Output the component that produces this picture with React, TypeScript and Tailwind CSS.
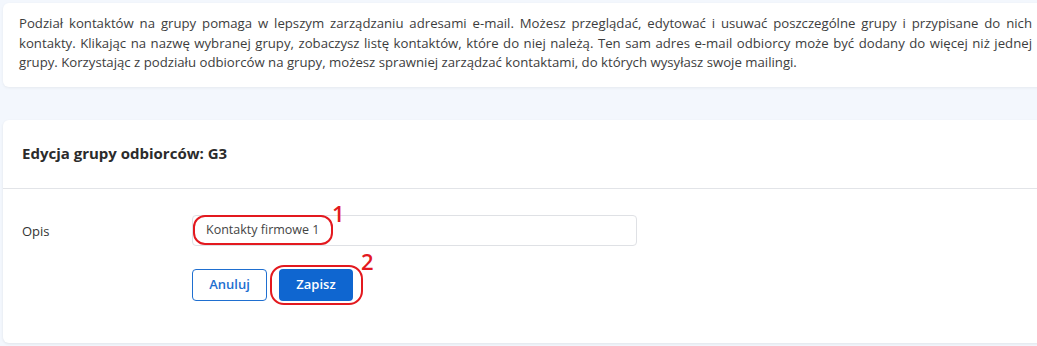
import React from "react";

const App = () => {
  return (
    <div className="w-[1037px] h-[346px] overflow-hidden bg-[#f3f7fd] font-['Open_Sans',sans-serif]">
      <div className="w-[1048px] flex flex-col pl-[3px] pt-[3px] gap-[33px]">
        <div className="bg-white rounded-md shadow-[0_1px_3px_rgba(0,0,0,0.06)] px-4 pt-[11px] pb-[14px]">
          <div className="text-[#3d3d3d] text-[13.2px] leading-[19.5px] w-[1013px]">
            <p className="[text-align-last:justify]">
              Podział kontaktów na grupy pomaga w lepszym zarządzaniu adresami e-mail. Możesz przeglądać, edytować i usuwać poszczególne grupy i przypisane do nich
            </p>
            <p className="[text-align-last:justify]">
              kontakty. Klikając na nazwę wybranej grupy, zobaczysz listę kontaktów, które do niej należą. Ten sam adres e-mail odbiorcy może być dodany do więcej niż jednej
            </p>
            <p>
              grupy. Korzystając z podziału odbiorców na grupy, możesz sprawniej zarządzać kontaktami, do których wysyłasz swoje mailingi.
            </p>
          </div>
        </div>
        <div className="bg-white rounded-md shadow-[0_1px_3px_rgba(0,0,0,0.08)] h-[223px]">
          <div className="h-[69px] flex items-center px-[19px] border-b border-[#e2e4e8]">
            <h2 className="text-[#2b2b2b] text-[15px] font-bold">Edycja grupy odbiorców: G3</h2>
          </div>
          <div className="pt-[26px] flex flex-col gap-[23px]">
            <div className="flex items-center">
              <span className="w-[189px] pl-[19px] pt-[3px] text-[#333333] text-[13px]">Opis</span>
              <div className="relative">
                <div className="w-[445px] h-[31px] border border-[#dfe1e5] rounded-[4px] flex items-center pl-[13px] text-[12.5px] text-[#444444]">
                  Kontakty firmowe 1
                </div>
                <div className="absolute left-[1px] top-0 w-[140px] h-[30px] border-2 border-[#e3191f] rounded-[12px]" />
                <span className="absolute left-[140px] top-[-13px] text-[#e3191f] text-[22px] font-semibold leading-none">1</span>
              </div>
            </div>
            <div className="flex pl-[189px] gap-[12px]">
              <button className="w-[75px] h-[32px] border border-[#1f6fd0] rounded-[4px] text-[#1f6fd0] text-[13px] font-semibold bg-white">
                Anuluj
              </button>
              <div className="relative">
                <button className="w-[74px] h-[32px] rounded-[4px] bg-[#0f66d0] text-white text-[13px] font-semibold">
                  Zapisz
                </button>
                <div className="absolute left-[-9px] top-[-4px] w-[93px] h-[40px] border-2 border-[#e3191f] rounded-[14px]" />
                <span className="absolute left-[82px] top-[-19px] text-[#e3191f] text-[22px] font-semibold leading-none">2</span>
              </div>
            </div>
          </div>
        </div>
      </div>
    </div>
  );
};

export default App;
